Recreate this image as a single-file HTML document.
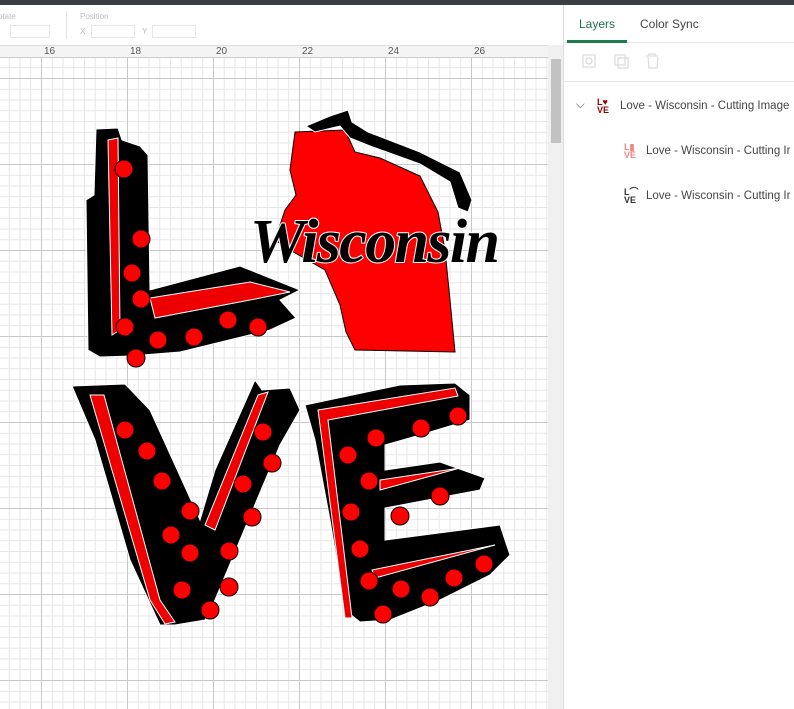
<!DOCTYPE html>
<html><head><meta charset="utf-8"><style>
*{margin:0;padding:0;box-sizing:border-box}
body{width:794px;height:709px;overflow:hidden;background:#fff;font-family:"Liberation Sans",sans-serif;position:relative}
.top{position:absolute;left:0;top:0;width:794px;height:5px;background:#3b3f44}
.tool{position:absolute;left:0;top:5px;width:564px;height:40px;background:#fff;color:#bbb;font-size:8px}
.ruler{position:absolute;left:0;top:45px;width:548px;height:13px;background:#f4f4f4;border-top:1px solid #ddd;border-bottom:1px solid #ccc}
.ruler span{position:absolute;top:0;font-size:10px;color:#555}
.canvas{position:absolute;left:0;top:58px;width:548px;height:651px;
background-color:#fff;
background-image:linear-gradient(#c8c8c8 1px,transparent 1px),linear-gradient(90deg,#c8c8c8 1px,transparent 1px),linear-gradient(#e6e6e6 1px,transparent 1px),linear-gradient(90deg,#e6e6e6 1px,transparent 1px);
background-size:86px 86px,86px 86px,10.75px 10.75px,10.75px 10.75px;
background-position:41px 20px,41px 20px,41px 20px,41px 20px}
.sb{position:absolute;left:548px;top:45px;width:15px;height:664px;background:#f0f0f0}
.thumb{position:absolute;left:551px;top:59px;width:10px;height:84px;background:#c2c2c2}
.panel{position:absolute;left:563px;top:5px;width:231px;height:704px;background:#fff;border-left:1px solid #ddd}
.tabs{height:38px;border-bottom:1px solid #e5e5e5;position:relative;font-size:12px}
.tabs .a{position:absolute;left:15px;top:12px;color:#1f6e4a}
.tabs .b{position:absolute;left:76px;top:12px;color:#444}
.tabs .u{position:absolute;left:3px;top:35px;width:60px;height:3px;background:#1f7a50}
.icons{height:39px;border-bottom:1px solid #e5e5e5}
.row{position:absolute;font-size:11.5px;color:#444;white-space:nowrap}
</style></head><body>
<div class="top"></div>
<div class="tool">
<div style="position:absolute;left:-2px;top:7px">otate</div>
<div style="position:absolute;left:10px;top:20px;width:40px;height:13px;border:1px solid #e6e6e6"></div>
<div style="position:absolute;left:66px;top:6px;width:1px;height:28px;background:#e3e3e3"></div>
<div style="position:absolute;left:80px;top:7px">Position</div>
<div style="position:absolute;left:80px;top:22px">X</div>
<div style="position:absolute;left:91px;top:20px;width:44px;height:13px;border:1px solid #e6e6e6"></div>
<div style="position:absolute;left:142px;top:22px">Y</div>
<div style="position:absolute;left:152px;top:20px;width:44px;height:13px;border:1px solid #e6e6e6"></div>
</div>
<div class="ruler">
<span style="left:44px">16</span><span style="left:130px">18</span><span style="left:216px">20</span><span style="left:302px">22</span><span style="left:388px">24</span><span style="left:474px">26</span>
</div>
<div class="canvas"></div>
<svg style="position:absolute;left:0;top:58px" width="548" height="651" viewBox="0 58 548 651">
<g stroke="#fff" stroke-width="1">
<!-- L -->
<path d="M96 129 L118 128 L122 140 L140 146 L148 155 L150 290 L240 266 L300 290 L280 300 L296 318 L270 330 L180 352 L130 356 L100 357 L88 350 L86 200 L94 195 Z" fill="#000"/>
<path d="M108 140 L118 138 L120 330 L112 335 Z" fill="#e00"/>
<path d="M150 298 L250 282 L290 292 L250 300 L155 318 Z" fill="#e00"/>
<!-- state -->
<path d="M295 132 L345 130 L355 152 L380 158 L420 176 L438 212 L445 250 L450 300 L455 352 L355 350 L346 332 L340 305 L325 270 L290 250 L275 240 L285 210 L296 195 L290 170 Z" fill="#f00" stroke="#000"/>
<path d="M306 126 L330 116 L348 110 L352 122 L368 132 L420 152 L460 172 L472 200 L468 212 L458 208 L450 182 L420 164 L370 146 L350 138 L340 126 L315 132 Z" fill="#000"/>
<!-- V -->
<path d="M72 386 L125 384 L150 410 L200 520 L215 470 L255 380 L262 390 L290 388 L300 410 L280 445 L240 540 L215 600 L205 620 L175 625 L160 625 L130 560 L95 440 Z" fill="#000"/>
<path d="M90 395 L104 395 L160 600 L175 622 L165 624 L150 600 Z" fill="#e00"/>
<path d="M258 395 L268 392 L215 530 L205 525 Z" fill="#e00"/>
<!-- E -->
<path d="M305 405 L400 385 L455 383 L470 395 L470 420 L420 435 L385 445 L385 470 L440 462 L485 478 L480 490 L385 508 L385 540 L500 525 L510 555 L490 575 L440 600 L390 620 L360 622 L345 610 L330 520 L315 440 Z" fill="#000"/>
<path d="M318 410 L455 388 L458 396 L328 420 L352 618 L345 618 Z" fill="#e00"/>
<path d="M380 480 L460 468 L380 490 Z M372 570 L495 545 L375 578 Z" fill="#e00"/>
</g>
<g fill="#f00" stroke="#000" stroke-width="1">
<circle cx="124" cy="169" r="9"/><circle cx="141" cy="239" r="9"/><circle cx="132" cy="273" r="9"/><circle cx="141" cy="299" r="9"/><circle cx="125" cy="327" r="9"/><circle cx="158" cy="340" r="9"/><circle cx="194" cy="337" r="9"/><circle cx="228" cy="320" r="9"/><circle cx="258" cy="327" r="9"/><circle cx="136" cy="358" r="9"/>
<circle cx="125" cy="430" r="9"/><circle cx="147" cy="451" r="9"/><circle cx="162" cy="481" r="9"/><circle cx="190" cy="511" r="9"/><circle cx="171" cy="535" r="9"/><circle cx="190" cy="553" r="9"/><circle cx="182" cy="590" r="9"/><circle cx="210" cy="610" r="9"/>
<circle cx="263" cy="432" r="9"/><circle cx="272" cy="463" r="9"/><circle cx="243" cy="484" r="9"/><circle cx="252" cy="517" r="9"/><circle cx="229" cy="551" r="9"/><circle cx="229" cy="587" r="9"/>
<circle cx="376" cy="438" r="9"/><circle cx="421" cy="428" r="9"/><circle cx="458" cy="416" r="9"/><circle cx="348" cy="455" r="9"/><circle cx="369" cy="481" r="9"/><circle cx="351" cy="512" r="9"/><circle cx="400" cy="516" r="9"/><circle cx="440" cy="496" r="9"/><circle cx="360" cy="549" r="9"/><circle cx="369" cy="581" r="9"/><circle cx="401" cy="589" r="9"/><circle cx="430" cy="597" r="9"/><circle cx="454" cy="578" r="9"/><circle cx="484" cy="564" r="9"/><circle cx="383" cy="614" r="9"/>
</g>
<text x="250" y="262" font-family="Liberation Serif,serif" font-style="italic" font-weight="bold" font-size="62" fill="#000" stroke="#fff" stroke-width="2" paint-order="stroke" textLength="250">Wisconsin</text>
</svg>
<div class="sb"></div><div class="thumb"></div>
<div class="panel">
<div class="tabs"><span class="a">Layers</span><span class="b">Color Sync</span><div class="u"></div></div>
<div class="icons">
<svg width="100" height="38" style="margin-left:16px"><g fill="none" stroke="#ddd" stroke-width="1.3"><rect x="3" y="12" width="12" height="12"/><circle cx="9" cy="18" r="3"/><rect x="35" y="12" width="10" height="10"/><rect x="38" y="15" width="10" height="10"/><path d="M66 13h12M69 13v-2h6v2M68 14l1 11h8l1-11"/></g></svg>
</div>
<div class="row" style="left:12px;top:94px;color:#555">⌵</div>
<div class="row" style="left:33px;top:93px;font-weight:bold;color:#900;font-size:9px;line-height:8px">L♥<br>VE</div>
<div class="row" style="left:56px;top:95px">Love - Wisconsin - Cutting Image</div>
<div class="row" style="left:60px;top:138px;font-weight:bold;color:#e88;font-size:9px;line-height:8px">L▮<br>VE</div>
<div class="row" style="left:82px;top:140px">Love - Wisconsin - Cutting Ir</div>
<div class="row" style="left:60px;top:183px;font-weight:bold;color:#333;font-size:9px;line-height:8px">L⌒<br>VE</div>
<div class="row" style="left:82px;top:185px">Love - Wisconsin - Cutting Ir</div>
</div>
</body></html>
